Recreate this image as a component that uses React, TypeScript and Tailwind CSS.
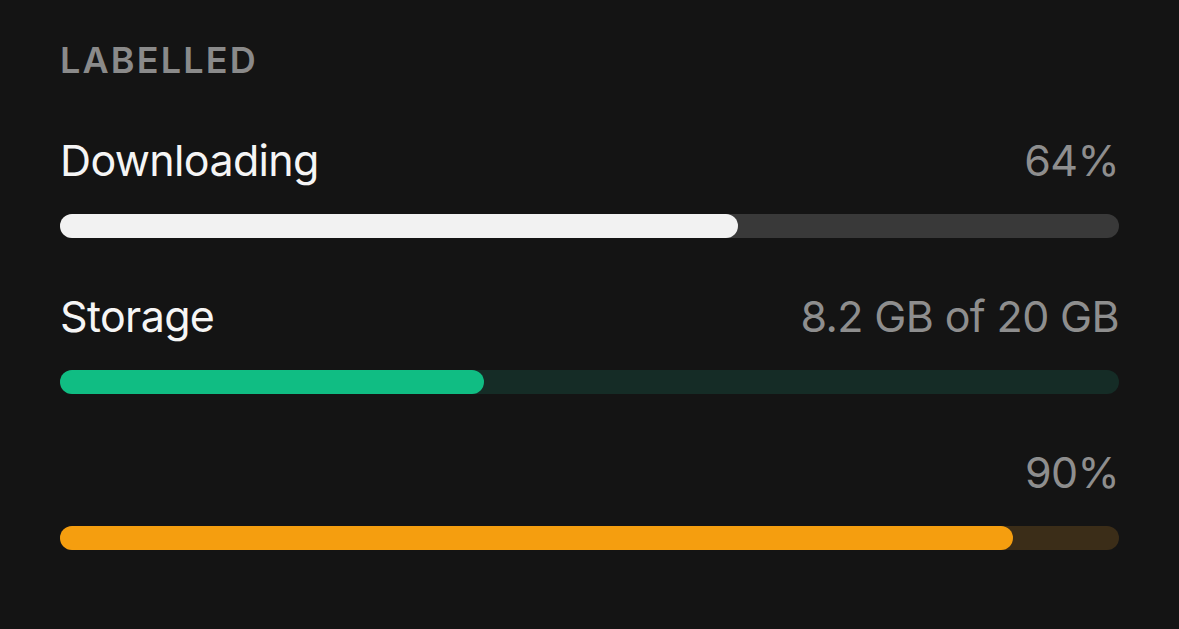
const rows = [
  { label: "Downloading", value: "64%", pct: 64, track: "bg-[#393939]", fill: "bg-[#f2f2f2]" },
  { label: "Storage", value: "8.2 GB of 20 GB", pct: 40, track: "bg-[#152c26]", fill: "bg-[#10bd83]" },
  { label: "", value: "90%", pct: 90, track: "bg-[#3b2d18]", fill: "bg-[#f59e0f]" },
];

export default function App() {
  return (
    <div className="min-h-screen bg-[#141414] px-[60px] pt-[38px] font-['Inter','Liberation_Sans',sans-serif]">
      <h2 className="text-[36px] leading-[44px] font-semibold tracking-[0.06em] text-[#8a8a8a]">LABELLED</h2>
      <div className="mt-[52px] flex flex-col gap-[52px]">
        {rows.map((r) => (
          <div key={r.value} className="flex flex-col gap-[28px]">
            <div className="flex items-center justify-between text-[43px] leading-[52px] tracking-[-0.015em]">
              <span className="text-[#f5f5f5]">{r.label}</span>
              <span className="text-[#8e8e8e]">{r.value}</span>
            </div>
            <div className={`h-[24px] w-full rounded-full ${r.track}`}>
              <div className={`h-full rounded-full ${r.fill}`} style={{ width: `${r.pct}%` }} />
            </div>
          </div>
        ))}
      </div>
    </div>
  );
}
